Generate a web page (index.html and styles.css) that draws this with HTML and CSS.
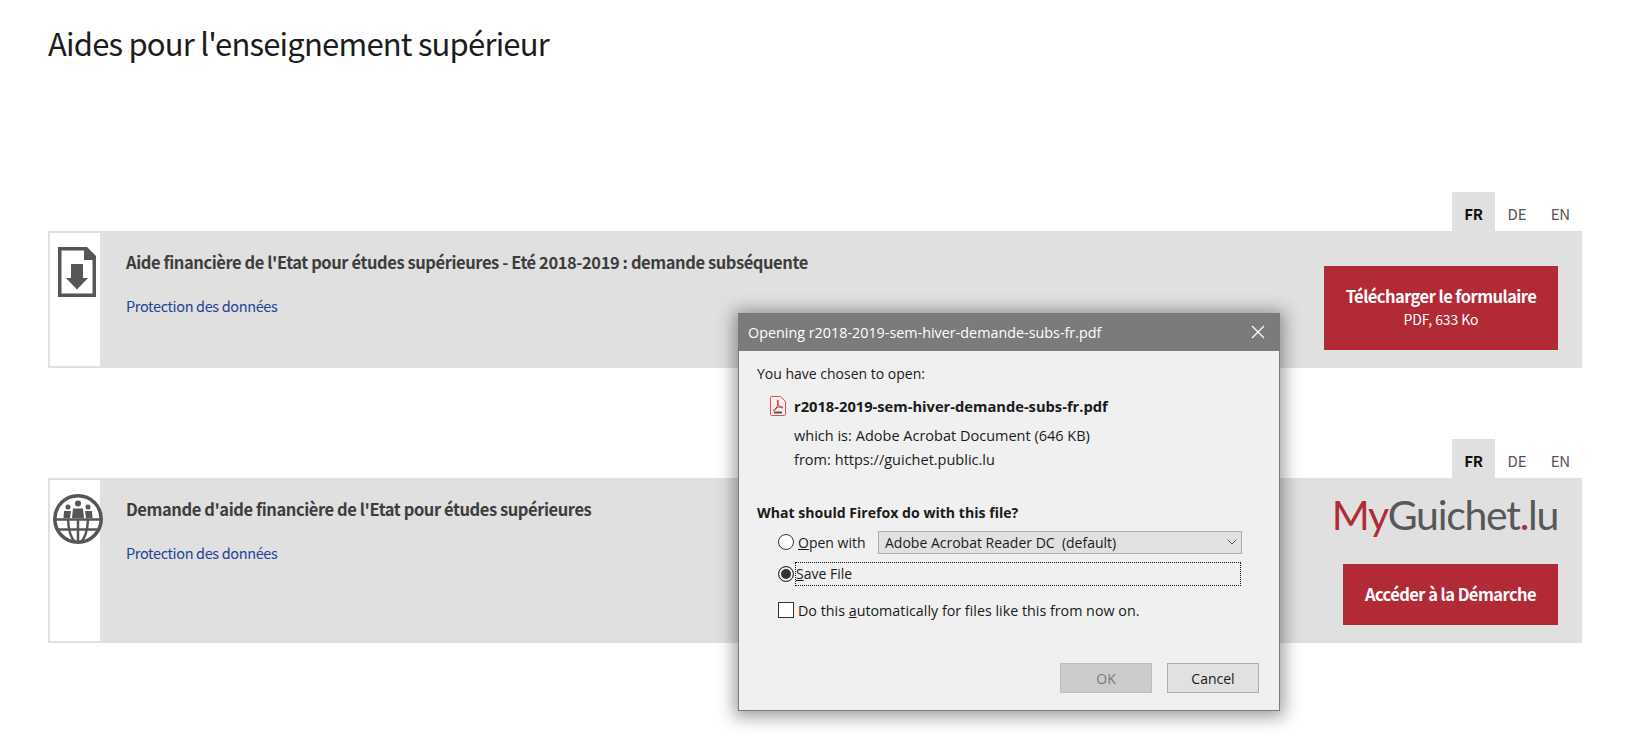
FILE: index.html
```html
<!DOCTYPE html>
<html lang="fr">
<head>
<meta charset="utf-8">
<title>Aides pour l'enseignement supérieur</title>
<link rel="stylesheet" href="styles.css">
</head>
<body>
<h1 class="page-title">Aides pour l'enseignement supérieur</h1>

<section class="aid aid-first">
  <div class="tabs"><span class="tab active">FR</span><span class="tab">DE</span><span class="tab">EN</span></div>
  <div class="card card-form">
    <div class="card-icon">
      <svg class="icon-doc" width="38" height="50" viewBox="0 0 38 50">
        <path class="doc-outline" d="M1.750 1.750H27L36.250 11V48.250H1.750Z"/>
        <path class="doc-fill" d="M26 0H29L38 9V13H26Z"/>
        <path class="doc-fill" d="M13 17H25V31H30L19 42.500L8 31H13Z"/>
      </svg>
    </div>
    <div class="card-body">
      <h2 class="card-title">Aide financière de l'Etat pour études supérieures - Eté 2018-2019 : demande subséquente</h2>
      <a class="card-link">Protection des données</a>
    </div>
    <div class="card-action">
      <a class="btn btn-form"><strong>Télécharger le formulaire</strong><small>PDF, 633 Ko</small></a>
    </div>
  </div>
</section>

<section class="aid aid-second">
  <div class="tabs"><span class="tab active">FR</span><span class="tab">DE</span><span class="tab">EN</span></div>
  <div class="card card-online">
    <div class="card-icon">
      <svg class="icon-globe" width="50" height="50" viewBox="0 0 50 50">
        <circle class="globe-ring" cx="25" cy="25" r="23.200"/>
        <path class="globe-line" d="M2 25.500H48M5 35.500H45M25 25.500V48M15 25.500C15.500 36 17 43 22 48M35 25.500C34.500 36 33 43 28 48"/>
        <circle class="doc-fill" cx="25" cy="9.500" r="3"/>
        <circle class="doc-fill" cx="15" cy="13" r="2.500"/>
        <circle class="doc-fill" cx="35" cy="13" r="2.500"/>
        <path class="doc-fill" d="M20 14.500H30L31 24H19Z"/>
        <path class="doc-fill" d="M11 17H18L17 24H10.500Z"/>
        <path class="doc-fill" d="M32 17H39L39.500 24H33Z"/>
      </svg>
    </div>
    <div class="card-body">
      <h2 class="card-title">Demande d'aide financière de l'Etat pour études supérieures</h2>
      <a class="card-link">Protection des données</a>
    </div>
    <div class="card-action card-action-logo">
      <div class="logo"><span class="logo-red">My</span>Guichet<span class="logo-red">.</span>lu</div>
      <a class="btn btn-online"><strong>Accéder à la Démarche</strong></a>
    </div>
  </div>
</section>

<div class="dialog">
  <div class="dialog-bar">
    <span>Opening r2018-2019-sem-hiver-demande-subs-fr.pdf</span>
    <svg class="dialog-close" width="14" height="14" viewBox="0 0 14 14"><path d="M1 1L13 13M13 1L1 13"/></svg>
  </div>
  <div class="dialog-content">
    <p class="intro">You have chosen to open:</p>
    <div class="file-row">
      <svg class="icon-pdf" width="16" height="20" viewBox="0 0 16 20">
        <path class="pdf-page" d="M1.500 .5H10.500L15.500 5.500V18.500Q15.500 19.500 14.500 19.500H1.500Q.5 19.500 .5 18.500V1.500Q.5 .5 1.500 .5Z"/>
        <path class="pdf-mark" d="M8 4C6.500 4 8 8 9 10C10 11.500 12.500 12.500 13 11.500C13 10.500 9 10.500 6 12C4 13 3 15 4 15C5.500 15 7.500 10 8 7C8.300 5.500 8.500 4 8 4Z"/>
        <rect class="pdf-tag" x="4" y="15.500" width="8" height="2"/>
      </svg>
      <strong>r2018-2019-sem-hiver-demande-subs-fr.pdf</strong>
    </div>
    <div class="meta-row meta-type"><span class="meta-label">which is:</span><span>Adobe Acrobat Document (646 KB)</span></div>
    <div class="meta-row meta-from"><span class="meta-label">from:</span><span>https://guichet.public.lu</span></div>
    <p class="question">What should Firefox do with this file?</p>
    <div class="option option-open">
      <span class="radio"></span>
      <span class="option-label"><u>O</u>pen with</span>
      <span class="select"><span>Adobe Acrobat Reader DC&nbsp; (default)</span>
        <svg class="select-arrow" width="10" height="6" viewBox="0 0 10 6"><path d="M.5 .5L5 5L9.500 .5"/></svg>
      </span>
    </div>
    <div class="option option-save">
      <span class="radio radio-on"></span>
      <span class="focus-label"><u>S</u>ave File</span>
    </div>
    <div class="option option-auto">
      <span class="checkbox"></span>
      <span class="auto-label">Do this <u>a</u>utomatically for files like this from now on.</span>
    </div>
    <div class="dialog-buttons">
      <span class="dialog-btn dialog-btn-off">OK</span>
      <span class="dialog-btn">Cancel</span>
    </div>
  </div>
</div>
</body>
</html>
```

FILE: styles.css
```css
* { box-sizing: border-box; }
html, body { margin: 0; height: 100%; overflow: hidden; }
body {
  padding: 0 50px 0 48px;
  background: #fff;
  color: #3a3a3a;
  font-family: "Noto Sans CJK SC", "Noto Sans", sans-serif;
}
.page-title {
  margin: 0;
  padding-top: 21px;
  height: 192px;
  font-size: 31px;
  line-height: 44px;
  font-weight: 400;
  letter-spacing: -.8px;
  color: #1c1c1c;
}
.aid-second { margin-top: 71px; }
.tabs { display: flex; justify-content: flex-end; height: 39px; }
.tab {
  width: 43.400px;
  height: 39px;
  padding-top: 12px;
  text-align: center;
  font-size: 15px;
  line-height: 20px;
  letter-spacing: -.2px;
  color: #555;
}
.tab.active { background: #e0e0e0; color: #111; font-weight: 700; }
.card {
  display: flex;
  background: #e0e0e0;
  border: 2px solid #e0e0e0;
  border-right: 0;
}
.card-form { height: 137px; }
.card-online { height: 165px; }
.card-icon {
  flex: none;
  width: 50px;
  background: #fff;
}
.icon-doc { display: block; margin: 14px 0 0 8px; }
.icon-globe { display: block; margin: 14px 0 0 3px; }
.doc-outline { fill: none; stroke: #565656; stroke-width: 3.500; }
.doc-fill { fill: #565656; stroke: none; }
.globe-ring { fill: none; stroke: #565656; stroke-width: 3.500; }
.globe-line { fill: none; stroke: #565656; stroke-width: 2.500; }
.card-body { flex: 1; padding: 17px 0 0 26px; min-width: 0; }
.card-title {
  margin: 0;
  font-size: 16.500px;
  line-height: 24px;
  font-weight: 700;
  letter-spacing: -.42px;
  color: #3d3d3d;
}
.card-link {
  display: block;
  margin-top: 21px;
  font-size: 14.500px;
  line-height: 22px;
  letter-spacing: -.36px;
  color: #25409a;
}
.card-action {
  flex: none;
  width: 258px;
  padding: 33px 24px 0 0;
  display: flex;
  flex-direction: column;
  align-items: flex-end;
}
.card-action-logo { padding-top: 5px; }
.btn {
  display: flex;
  flex-direction: column;
  align-items: center;
  justify-content: center;
  padding-bottom: 2px;
  background: #b22a35;
  color: #fff;
}
.btn strong { font-size: 16.500px; line-height: 24px; font-weight: 700; letter-spacing: -.55px; }
.btn small { font-size: 14px; line-height: 22px; letter-spacing: -.1px; }
.btn-form { width: 234px; height: 84px; }
.btn-online { width: 215px; height: 61px; margin-top: 19px; }
.logo {
  height: 60px;
  font-family: Lato, "Noto Sans", sans-serif;
  font-size: 41px;
  line-height: 60px;
  font-weight: 400;
  letter-spacing: -1.300px;
  color: #58585a;
  white-space: nowrap;
}
.logo-red { color: #b22a35; }

.dialog {
  position: absolute;
  left: 738px;
  top: 313px;
  width: 542px;
  height: 398px;
  background: #f0f0f0;
  border: 1px solid #7b7b7b;
  border-top: 0;
  box-shadow: 0 2px 16px 4px rgba(0, 0, 0, .38);
  font-family: "Open Sans", "Noto Sans", sans-serif;
  font-size: 14px;
  color: #1a1a1a;
}
.dialog-bar {
  display: flex;
  align-items: center;
  justify-content: space-between;
  height: 38px;
  margin: 0 -1px;
  padding: 0 15px 0 10px;
  background: #7b7b7b;
  color: #fff;
  font-size: 14.350px;
}
.dialog-close { fill: none; stroke: #fff; stroke-width: 1.200; }
.dialog-content { padding: 13px 18px 0; position: relative; height: 359px; }
.intro { margin: 0; line-height: 20px; }
.file-row {
  display: flex;
  align-items: center;
  gap: 8px;
  margin: 11px 0 0 13px;
  height: 22px;
}
.file-row strong { font-weight: 700; font-size: 14.700px; }
.pdf-page { fill: #fbeeee; stroke: #d9534f; stroke-width: 1; }
.pdf-mark { fill: none; stroke: #d0312d; stroke-width: 1; }
.pdf-tag { fill: #555; }
.meta-row { display: flex; gap: 4px; margin-left: 37px; line-height: 20px; font-size: 14.500px; }
.meta-type { margin-top: 9px; }
.meta-from { margin-top: 4px; }
.question { margin: 33px 0 0; line-height: 20px; font-weight: 700; font-size: 14.100px; }
.option { display: flex; align-items: center; margin-left: 21px; }
.option-open { margin-top: 7px; height: 24px; }
.option-save { margin-top: 8px; height: 24px; }
.option-auto { margin-top: 12px; height: 24px; }
.radio {
  flex: none;
  width: 16px;
  height: 16px;
  border: 1px solid #333;
  border-radius: 50%;
  background: #fff;
  margin-right: 4px;
}
.radio-on { background: #333; box-shadow: inset 0 0 0 2px #f0f0f0; margin-right: 1px; }
.option-label { width: 80px; }
.select {
  flex: none;
  width: 364px;
  height: 23px;
  display: flex;
  align-items: center;
  justify-content: space-between;
  padding: 0 4px 0 6px;
  background: #e1e1e1;
  border: 1px solid #adadad;
}
.select-arrow { fill: none; stroke: #555; stroke-width: 1; }
.focus-label {
  width: 446px;
  height: 24px;
  line-height: 22px;
  border: 1px dotted #111;
}
.checkbox {
  flex: none;
  width: 16px;
  height: 16px;
  border: 1px solid #333;
  background: #fff;
  margin-right: 4px;
}
.auto-label { font-size: 14.300px; }
.dialog-buttons {
  position: absolute;
  right: 20px;
  bottom: 17px;
  display: flex;
  gap: 15px;
}
.dialog-btn {
  width: 92px;
  height: 30px;
  line-height: 30px;
  text-align: center;
  background: #e1e1e1;
  border: 1px solid #adadad;
}
.dialog-btn-off { background: #cbcbcb; border-color: #bfbfbf; color: #7a7a7a; }
```
